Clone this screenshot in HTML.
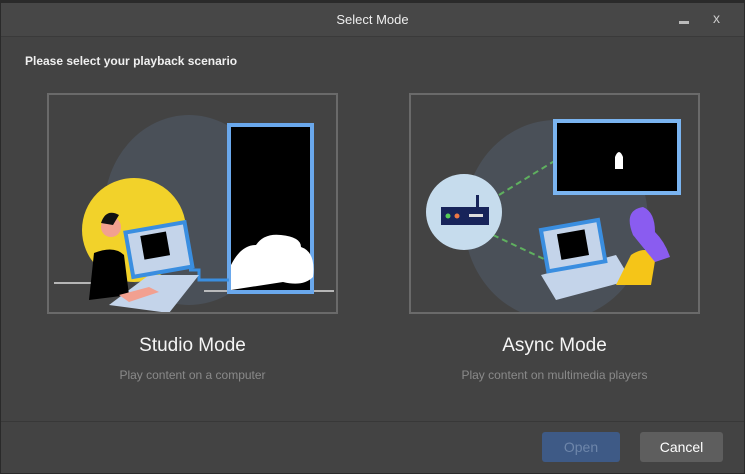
<!DOCTYPE html><html><head><style>
body{margin:0;width:745px;height:474px;background:#2a2a2a;font-family:"Liberation Sans",sans-serif;overflow:hidden;position:relative}
.win{position:absolute;left:1px;top:3px;width:743px;height:470px;background:#434343}
.tb{position:absolute;left:0;top:0;width:743px;height:33px;background:#474747;border-bottom:1px solid #3a3a3a}
.t{position:absolute;color:#eee}
.card{position:absolute;top:93px;width:287px;height:217px;border:2px solid #6a6a6a;background:#434343;overflow:hidden}
.btn{position:absolute;top:432px;height:30px;border-radius:3px;font-size:14px;text-align:center;line-height:30px}
</style></head><body><div class="win">
<div class="tb"><div class="t" style="left:0;width:743px;text-align:center;top:9px;font-size:13px">Select Mode</div>
<div style="position:absolute;left:678px;top:18px;width:10px;height:3px;background:#bbb"></div>
<div class="t" style="left:712px;top:7px;font-size:14px;color:#ccc">x</div></div>
<div class="t" style="left:24px;top:51px;font-size:12px;font-weight:bold;color:#f0f0f0">Please select your playback scenario</div>
</div>
<div class="card" style="left:47px">
<svg width="287" height="217">
<ellipse cx="140" cy="115" rx="85" ry="95" fill="#4a5058"/>
<circle cx="85" cy="135" r="52" fill="#f2d22a"/>
<line x1="5" y1="188" x2="70" y2="188" stroke="#ddd" stroke-width="1.5"/>
<line x1="155" y1="196" x2="285" y2="196" stroke="#ddd" stroke-width="1.5"/>
<rect x="180" y="30" width="83" height="167" fill="#000" stroke="#6aa8ec" stroke-width="4"/>
<path d="M182 170 q10-20 25-20 q8-12 25-10 q20 2 20 12 q15 5 12 30 q-10 10 -30 5 L182 195z" fill="#fff"/>
<path d="M140 175 l10 0 l0 10 l30 0" stroke="#3a8ee0" stroke-width="3" fill="none"/>
<polygon points="100,180 150,180 120,218 60,210" fill="#c4d4ea"/>
<rect x="80" y="132" width="60" height="45" fill="#c4d4ea" stroke="#3a8ee0" stroke-width="4" transform="rotate(-10 110 155)"/>
<rect x="94" y="138" width="26" height="24" fill="#000" transform="rotate(-10 110 155)"/>
<path d="M45 158 q20-8 30 2 l5 40 l-40 5z" fill="#000"/>
<path d="M70 200 l30 -8 l10 5 l-30 10z" fill="#f2a090"/>
<circle cx="62" cy="132" r="10" fill="#f2a090"/><path d="M52 128 q5-15 18-8 l-6 10z" fill="#111"/>
</svg></div>
<div class="card" style="left:409px">
<svg width="287" height="217">
<ellipse cx="145" cy="125" rx="92" ry="100" fill="#4a5058"/>
<line x1="88" y1="100" x2="145" y2="65" stroke="#5fb05f" stroke-width="2" stroke-dasharray="6 4"/>
<line x1="82" y1="140" x2="135" y2="165" stroke="#5fb05f" stroke-width="2" stroke-dasharray="6 4"/>
<rect x="144" y="26" width="124" height="72" fill="#000" stroke="#7ab4f0" stroke-width="4"/>
<path d="M204 62 q4-10 8 0 l0 12 l-8 0z" fill="#fff"/>
<circle cx="53" cy="117" r="38" fill="#c6dced"/>
<rect x="30" y="112" width="48" height="18" fill="#17245a"/>
<rect x="65" y="100" width="3" height="12" fill="#17245a"/>
<circle cx="37" cy="121" r="2.5" fill="#5c5"/><circle cx="46" cy="121" r="2.5" fill="#e74"/>
<rect x="58" y="119" width="14" height="3" fill="#ddd"/>
<polygon points="130,180 205,160 220,185 145,205" fill="#c4d4ea"/>
<rect x="133" y="130" width="58" height="42" fill="#c4d4ea" stroke="#3a8ee0" stroke-width="4" transform="rotate(-10 160 150)"/>
<rect x="148" y="137" width="28" height="26" fill="#000" transform="rotate(-10 160 150)"/>
<path d="M220 160 q15-10 25 0 l-5 30 l-35 0z" fill="#f5c518"/>
<path d="M222 140 q-10-25 10-28 q12 5 12 25 q10 10 15 25 l-15 5z" fill="#8a5cf0"/>
</svg></div>
<div class="t" style="left:47px;width:291px;text-align:center;top:335px;font-size:19px;color:#f5f5f5">Studio Mode</div>
<div class="t" style="left:47px;width:291px;text-align:center;top:368px;font-size:12px;color:#8a8a8a">Play content on a computer</div>
<div class="t" style="left:409px;width:291px;text-align:center;top:335px;font-size:19px;color:#f5f5f5">Async Mode</div>
<div class="t" style="left:409px;width:291px;text-align:center;top:368px;font-size:12px;color:#8a8a8a">Play content on multimedia players</div>
<div style="position:absolute;left:1px;top:421px;width:743px;height:1px;background:#383838"></div>
<div class="btn" style="left:542px;width:78px;background:#3e5a86;color:#6e86aa">Open</div>
<div class="btn" style="left:640px;width:83px;background:#5e5e5e;color:#fff">Cancel</div>
</body></html>
